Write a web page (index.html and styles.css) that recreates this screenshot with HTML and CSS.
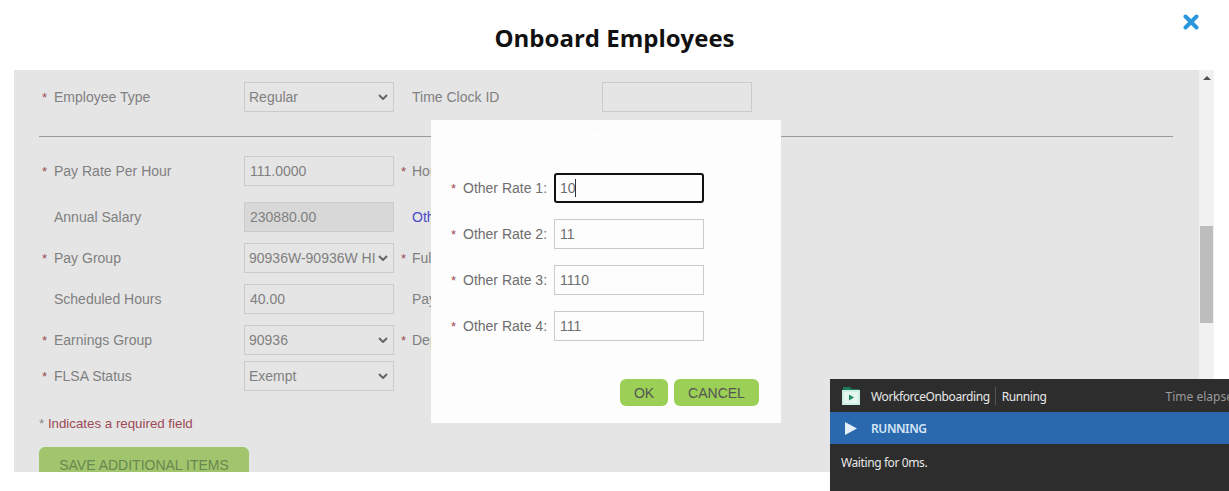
FILE: index.html
```html
<!DOCTYPE html>
<html>
<head>
	<meta charset="utf-8">
	<title>Onboard Employees</title>
	<link rel="stylesheet" href="styles.css">
</head>

<body>

	<div class="modal">
		<div class="modal-head">
			<h1>Onboard Employees</h1>
			<svg class="close" width="16" height="16" viewBox="0 0 16 16">
				<path d="M2.5 2.5L13.5 13.5M13.5 2.5L2.5 13.5" stroke="#2b98de" stroke-width="4" stroke-linecap="round"/>
			</svg>
		</div>

		<div class="panel">
			<div class="form">
				<div class="row first">
					<span class="star">*</span>
					<label class="name">Employee Type</label>
					<select class="field"><option>Regular</option></select>
					<span class="star2"></span>
					<label class="name2">Time Clock ID</label>
					<input class="field" type="text">
				</div>

				<hr class="line">

				<div class="row">
					<span class="star">*</span>
					<label class="name">Pay Rate Per Hour</label>
					<input class="field" type="text" value="111.0000">
					<span class="star2">*</span>
					<label class="name2">Hourly</label>
				</div>
				<div class="row">
					<span class="star"></span>
					<label class="name">Annual Salary</label>
					<input class="field off" type="text" value="230880.00" disabled>
					<span class="star2"></span>
					<a class="name2 link">Other Rates</a>
				</div>
				<div class="row tight">
					<span class="star">*</span>
					<label class="name">Pay Group</label>
					<select class="field"><option>90936W-90936W HI-TECH</option></select>
					<span class="star2">*</span>
					<label class="name2">Full Time</label>
				</div>
				<div class="row tight">
					<span class="star"></span>
					<label class="name">Scheduled Hours</label>
					<input class="field" type="text" value="40.00">
					<span class="star2"></span>
					<label class="name2">Pay Cycle</label>
				</div>
				<div class="row tight">
					<span class="star">*</span>
					<label class="name">Earnings Group</label>
					<select class="field"><option>90936</option></select>
					<span class="star2">*</span>
					<label class="name2">Department</label>
				</div>
				<div class="row close-row">
					<span class="star">*</span>
					<label class="name">FLSA Status</label>
					<select class="field"><option>Exempt</option></select>
				</div>

				<p class="required"><span>*</span> Indicates a required field</p>
				<button class="save">SAVE ADDITIONAL ITEMS</button>
			</div>

			<div class="scroll">
				<div class="arrow"></div>
				<div class="thumb"></div>
			</div>
		</div>
	</div>

	<!-- rate popup -->
	<div class="dialog">
		<div class="dialog-title">Other Rates</div>
		<div class="rate">
			<span class="star">*</span>
			<label>Other Rate 1:</label>
			<div class="rate-box">
				<input class="field focus" type="text" value="10">
				<i class="caret"></i>
			</div>
		</div>
		<div class="rate">
			<span class="star">*</span>
			<label>Other Rate 2:</label>
			<div class="rate-box"><input class="field" type="text" value="11"></div>
		</div>
		<div class="rate">
			<span class="star">*</span>
			<label>Other Rate 3:</label>
			<div class="rate-box"><input class="field" type="text" value="1110"></div>
		</div>
		<div class="rate">
			<span class="star">*</span>
			<label>Other Rate 4:</label>
			<div class="rate-box"><input class="field" type="text" value="111"></div>
		</div>
		<div class="actions">
			<button class="btn ok">OK</button>
			<button class="btn cancel">CANCEL</button>
		</div>
	</div>

	<!-- runner window -->
	<div class="runner">
		<div class="runner-head">
			<svg class="folder" width="18" height="18" viewBox="0 0 18 18">
				<path d="M1 0H8L10 2H17V4H1Z" fill="#1f7a5c"/>
				<rect x="0" y="3" width="18" height="15" fill="#cdeee0"/>
				<rect x="2" y="5" width="14" height="11" fill="#e4f6ee"/>
				<path d="M7 7.5L12 10.5L7 13.5Z" fill="#1f8a66"/>
			</svg>
			<span class="app">WorkforceOnboarding</span>
			<span class="state">Running</span>
			<span class="elapsed">Time elapsed</span>
		</div>
		<div class="runner-bar">
			<svg width="12" height="13" viewBox="0 0 12 13"><path d="M0 0L12 6.5L0 13Z" fill="#e6f0fa"/></svg>
			<span>RUNNING</span>
		</div>
		<div class="runner-msg">Waiting for 0ms.</div>
	</div>

</body>
</html>
```

FILE: styles.css
```css
* {
	box-sizing: border-box;
	padding: 0;
	margin: 0;
}
html, body {
	height: 100%;
	overflow: hidden;
}
body {
	background-color: #fff;
	font-family: "Liberation Sans", Arial, sans-serif;
	font-size: 14px;
	color: #808080;
}

.modal-head {
	position: relative;
	height: 70px;
	text-align: center;
}
.modal-head h1 {
	font-family: "Open Sans", sans-serif;
	font-size: 24px;
	font-weight: 700;
	line-height: 33px;
	padding-top: 21px;
	color: #111;
}
.close {
	position: absolute;
	top: 14px;
	left: 1183px;
}

.panel {
	display: flex;
	height: 402px;
	width: 1200px;
	margin-left: 14px;
	background-color: #e5e5e5;
	overflow: hidden;
}
.form {
	flex: 1;
	padding: 12px 26px 0 25px;
}
.scroll {
	position: relative;
	width: 15px;
	background-color: #f1f1f1;
}
.arrow {
	position: absolute;
	top: 6px;
	left: 4px;
	width: 0;
	height: 0;
	border-left: 4px solid transparent;
	border-right: 4px solid transparent;
	border-bottom: 4px solid #505050;
}
.thumb {
	position: absolute;
	top: 156px;
	left: 1px;
	width: 13px;
	height: 97px;
	background-color: #bdbdbd;
}

.row {
	display: flex;
	align-items: center;
	height: 30px;
	margin-top: 16px;
}
.row.first {
	margin-top: 0;
}
.row.tight {
	margin-top: 11px;
}
.row.close-row {
	margin-top: 6px;
}
.star {
	width: 15px;
	padding-left: 3px;
	color: #9c4a55;
	font-size: 13px;
}
.name {
	width: 190px;
}
.star2 {
	width: 11px;
	margin-left: 7px;
	color: #9c4a55;
	font-size: 13px;
}
.name2 {
	width: 190px;
}
.link {
	color: #4a4ac8;
}

.field {
	width: 150px;
	height: 30px;
	border: 1px solid #cbcbcb;
	border-radius: 0;
	background-color: transparent;
	padding: 0 5px;
	font-family: "Liberation Sans", Arial, sans-serif;
	font-size: 14px;
	color: #808080;
}
select.field {
	appearance: none;
	padding: 0 18px 0 4px;
	background-image: url("data:image/svg+xml,%3Csvg xmlns='http://www.w3.org/2000/svg' width='10' height='6'%3E%3Cpath d='M1 1L5 5L9 1' fill='none' stroke='%23666' stroke-width='2'/%3E%3C/svg%3E");
	background-repeat: no-repeat;
	background-position: right 5px center;
}
.field.off {
	background-color: #d8d8d8;
}

.line {
	height: 1px;
	margin: 24px 0 19px;
	border: 0;
	background-color: #9a9a9a;
}

.required {
	margin-top: 25px;
	font-size: 13.3px;
	line-height: 16px;
	color: #9c4a55;
}
.required span {
	color: #888;
}
.save {
	display: block;
	width: 210px;
	height: 36px;
	margin-top: 15px;
	border: 0;
	border-radius: 6px;
	background-color: #a1c56c;
	font-family: "Liberation Sans", Arial, sans-serif;
	font-size: 14px;
	color: #6a8550;
}

.dialog {
	position: absolute;
	left: 431px;
	top: 120px;
	width: 350px;
	height: 303px;
	background-color: #fdfdfd;
	padding: 0 22px 0 20px;
}
.dialog-title {
	height: 53px;
	padding: 9px 32px 0 0;
	text-align: center;
	font-size: 15px;
	font-weight: 700;
	color: #fff;
}
.dialog .field,
.rate label {
	color: #6e6e6e;
}
.rate {
	display: flex;
	align-items: center;
	height: 30px;
	margin-bottom: 16px;
}
.rate label {
	width: 91px;
	white-space: nowrap;
}
.rate .star {
	width: 12px;
	padding-left: 0;
}
.rate-box {
	position: relative;
}
.dialog .focus {
	border: 2px solid #111;
	border-radius: 3px;
	padding: 0 4px;
}
.caret {
	position: absolute;
	left: 21px;
	top: 6px;
	width: 1px;
	height: 18px;
	background-color: #333;
}
.actions {
	display: flex;
	justify-content: flex-end;
	gap: 6px;
	margin-top: 38px;
}
.btn {
	height: 27px;
	border: 0;
	border-radius: 6px;
	background-color: #9bcf56;
	font-family: "Liberation Sans", Arial, sans-serif;
	font-size: 14px;
	color: #555;
}
.ok {
	width: 48px;
}
.cancel {
	width: 85px;
}

.runner {
	position: absolute;
	left: 830px;
	top: 379px;
	width: 399px;
	height: 112px;
	overflow: hidden;
	background-color: #2d2d2d;
	font-family: "Noto Sans", sans-serif;
	font-size: 12px;
	letter-spacing: -0.4px;
	color: #e8e8e8;
}
.runner-head {
	display: flex;
	align-items: center;
	height: 33px;
	padding-left: 12px;
	white-space: nowrap;
}
.runner-head span {
	padding-top: 1px;
}
.folder {
	flex: none;
	margin-right: 11px;
}
.app {
	padding-right: 5px;
	border-right: 1px solid #555;
}
.state {
	padding-left: 6px;
}
.elapsed {
	margin-left: 119px;
	letter-spacing: 0;
	color: #9a9a9a;
}
.runner-bar {
	display: flex;
	align-items: center;
	height: 32px;
	padding-left: 15px;
	background-color: #2a69ae;
	font-weight: 600;
	color: #d6e6f6;
}
.runner-bar span {
	margin-left: 14px;
}
.runner-msg {
	padding: 10px 11px;
}
```
